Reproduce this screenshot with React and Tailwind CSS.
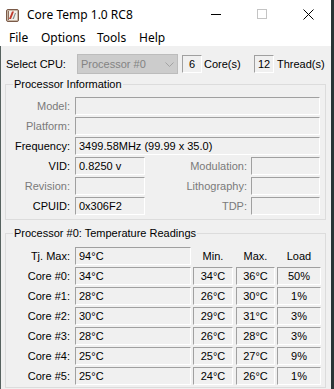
import React from 'react';

const sunken =
  'h-[18px] border-t border-l border-b border-r border-t-[#a0a0a0] border-l-[#a0a0a0] border-b-white border-r-white flex items-center';

function Field({ className = '', center, children }) {
  return (
    <div className={`${sunken} ${center ? 'justify-center' : 'pl-[3px]'} ${className}`}>
      {children}
    </div>
  );
}

function Group({ title, className = '', children }) {
  return (
    <div className={`relative ml-[4px] w-[321px] border border-[#dcdcdc] ${className}`}>
      <span className="absolute left-[7px] top-[-7px] bg-[#f0f0f0] px-[1px] leading-[13px] text-black">
        {title}
      </span>
      {children}
    </div>
  );
}

function InfoRow({ label, dim, children }) {
  return (
    <div className="flex h-[18px] items-center">
      <span className={`w-[64px] text-right ${dim ? 'text-[#7a7a7a]' : 'text-black'}`}>{label}</span>
      {children}
    </div>
  );
}

function AppIcon() {
  return (
    <svg width="13" height="13" viewBox="0 0 13 13" className="shrink-0">
      <rect x="0.5" y="0.5" width="12" height="12" rx="1.5" fill="#c8b7a6" stroke="#7a5a48" />
      <rect x="2" y="2" width="9" height="9" fill="#f4efe9" />
      <path d="M3 10 L6 2.5 L8 2.5 L5 10 Z" fill="#c0392b" />
      <path d="M6.5 10 L9 4 L10 4 L7.8 10 Z" fill="#7f8c8d" />
      <rect x="2" y="2" width="1" height="9" fill="#8e6e5c" />
    </svg>
  );
}

const cores = [
  ['Core #0:', '34°C', '34°C', '36°C', '50%'],
  ['Core #1:', '28°C', '26°C', '30°C', '1%'],
  ['Core #2:', '30°C', '29°C', '31°C', '3%'],
  ['Core #3:', '28°C', '26°C', '28°C', '3%'],
  ['Core #4:', '25°C', '25°C', '27°C', '9%'],
  ['Core #5:', '25°C', '24°C', '26°C', '1%'],
];

export default function App() {
  return (
    <div className="flex h-[389px] w-[334px] overflow-hidden bg-[#2a3535]">
      <div className="flex w-[331px] flex-col">
        {/* title bar */}
        <div className="flex h-[30px] shrink-0 items-center bg-white font-['Noto_Sans',sans-serif] text-[12px] text-black">
          <div className="ml-[6px] mt-[1px]">
            <AppIcon />
          </div>
          <span className="ml-[8px] leading-none">Core Temp 1.0 RC8</span>
          <div className="ml-auto flex h-full">
            <div className="flex w-[46px] items-center justify-center">
              <div className="mt-[-1px] h-px w-[10px] bg-black" />
            </div>
            <div className="flex w-[46px] items-center justify-center">
              <div className="mt-[-2px] h-[10px] w-[10px] border border-[#c4c4c4]" />
            </div>
            <div className="flex w-[46px] items-center justify-center">
              <svg width="11" height="11" viewBox="0 0 11 11" className="mt-[-2px]">
                <path d="M0.5 0.5 L10.5 10.5 M10.5 0.5 L0.5 10.5" stroke="#000" strokeWidth="1" />
              </svg>
            </div>
          </div>
        </div>

        {/* menu bar */}
        <div className="flex h-[16px] shrink-0 items-center bg-white pl-[9px] font-['Noto_Sans',sans-serif] text-[12px] leading-none text-black">
          <span className="w-[32px]">File</span>
          <span className="w-[56px]">Options</span>
          <span className="w-[42px]">Tools</span>
          <span>Help</span>
        </div>

        {/* body */}
        <div className="flex-1 border-l border-[#56625f] bg-[#f0f0f0] font-['Liberation_Sans',Arial,sans-serif] text-[11px] text-black">
          <div className="mt-[8px] flex h-[20px] items-center pl-[5px]">
            <span className="w-[71px]">Select CPU:</span>
            <div className="flex h-[20px] w-[101px] items-center border border-[#bcbcbc] bg-[#cccccc] pl-[3px] text-[#838383]">
              <span>Processor #0</span>
              <svg width="9" height="5" viewBox="0 0 9 5" className="ml-auto mr-[3px]">
                <path d="M0.5 0.5 L4.5 4.5 L8.5 0.5" fill="none" stroke="#a3a3a3" />
              </svg>
            </div>
            <Field center className="ml-[4px] w-[20px]">6</Field>
            <span className="ml-[2px] w-[50px]">Core(s)</span>
            <Field center className="w-[20px]">12</Field>
            <span className="ml-[3px]">Thread(s)</span>
          </div>

          <Group title="Processor Information" className="mt-[10px] pb-[4px] pt-[12px]">
            <div className="flex flex-col gap-[2px]">
              <InfoRow label="Model:" dim>
                <Field className="ml-[5px] w-[245px]" />
              </InfoRow>
              <InfoRow label="Platform:" dim>
                <Field className="ml-[5px] w-[245px]" />
              </InfoRow>
              <InfoRow label="Frequency:">
                <Field className="ml-[5px] w-[245px]">3499.58MHz (99.99 x 35.0)</Field>
              </InfoRow>
              <InfoRow label="VID:">
                <Field className="ml-[5px] w-[70px]">0.8250 v</Field>
                <span className="w-[102px] text-right text-[#7a7a7a]">Modulation:</span>
                <Field className="ml-[4px] w-[69px]" />
              </InfoRow>
              <InfoRow label="Revision:" dim>
                <Field className="ml-[5px] w-[70px]" />
                <span className="w-[102px] text-right text-[#7a7a7a]">Lithography:</span>
                <Field className="ml-[4px] w-[69px]" />
              </InfoRow>
              <InfoRow label="CPUID:">
                <Field className="ml-[5px] w-[70px]">0x306F2</Field>
                <span className="w-[102px] text-right text-[#7a7a7a]">TDP:</span>
                <Field className="ml-[4px] w-[69px]" />
              </InfoRow>
            </div>
          </Group>

          <Group title="Processor #0: Temperature Readings" className="mt-[13px] pb-[2px] pt-[13px]">
            <div className="flex flex-col gap-[2px]">
              <InfoRow label="Tj. Max:">
                <Field className="ml-[5px] w-[116px]">94°C</Field>
                <span className="ml-[2px] w-[40px] text-center">Min.</span>
                <span className="ml-[3px] w-[39px] text-center">Max.</span>
                <span className="ml-[2px] w-[44px] text-center">Load</span>
              </InfoRow>
              {cores.map(([label, cur, min, max, load]) => (
                <InfoRow key={label} label={label}>
                  <Field className="ml-[5px] w-[116px]">{cur}</Field>
                  <Field center className="ml-[2px] w-[40px]">{min}</Field>
                  <Field center className="ml-[3px] w-[39px]">{max}</Field>
                  <Field center className="ml-[2px] w-[44px]">{load}</Field>
                </InfoRow>
              ))}
            </div>
          </Group>
        </div>
      </div>
    </div>
  );
}
